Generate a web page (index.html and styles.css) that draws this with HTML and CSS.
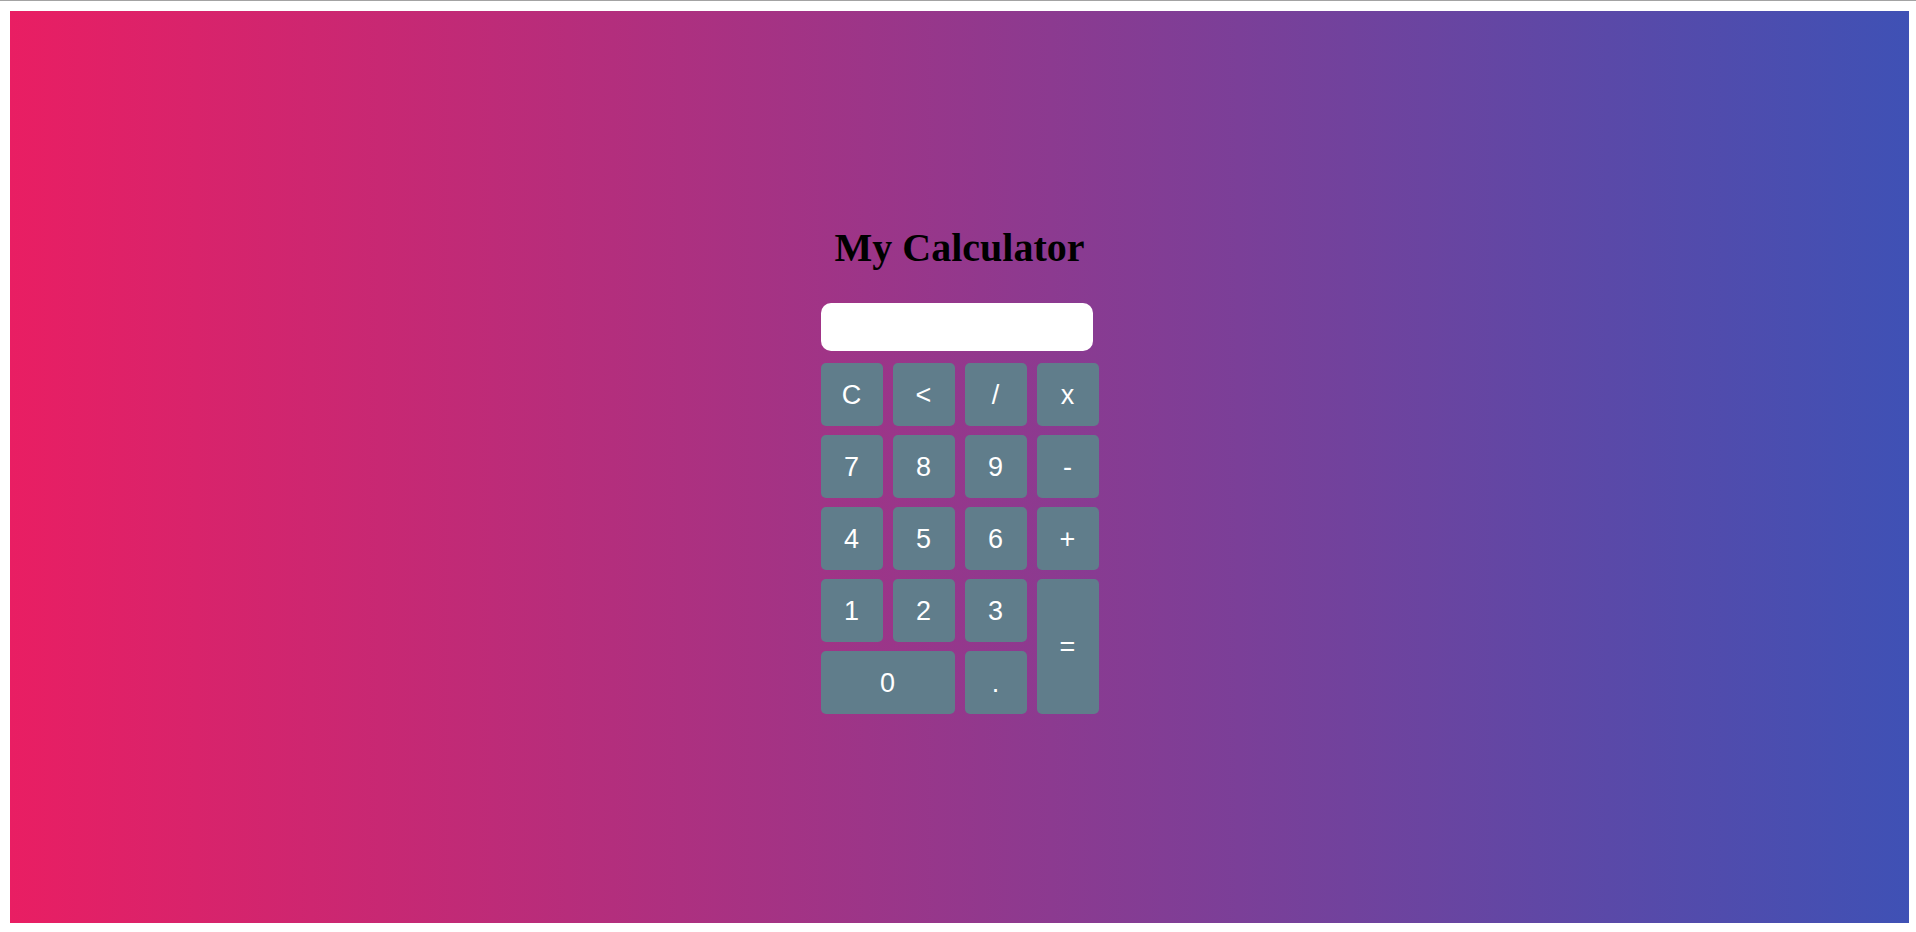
FILE: index.html
```html
<!DOCTYPE html>
<html lang="en">
<head>
<meta charset="UTF-8">
<title>My Calculator</title>
<link rel="stylesheet" href="styles.css">
</head>
<body>
  <main class="page">
    <div class="calculator">
      <h1 class="title">My Calculator</h1>
      <input class="display" type="text" readonly>
      <div class="keys">
        <button class="key">C</button>
        <button class="key">&lt;</button>
        <button class="key">/</button>
        <button class="key">x</button>
        <button class="key">7</button>
        <button class="key">8</button>
        <button class="key">9</button>
        <button class="key">-</button>
        <button class="key">4</button>
        <button class="key">5</button>
        <button class="key">6</button>
        <button class="key">+</button>
        <button class="key">1</button>
        <button class="key">2</button>
        <button class="key">3</button>
        <button class="key key-equals">=</button>
        <button class="key key-zero">0</button>
        <button class="key">.</button>
      </div>
    </div>
  </main>
</body>
</html>
```

FILE: styles.css
```css
html {
  border-top: 1px solid #a3a3a3;
  background: #ffffff;
}

body {
  margin: 10px 7px 9px 10px;
}

.page {
  height: 912px;
  background: linear-gradient(to right, #e91e63, #3f51b5);
  display: flex;
  align-items: center;
  justify-content: center;
}

.calculator {
  display: flex;
  flex-direction: column;
  align-items: flex-start;
  width: 278px;
  padding-top: 4px;
}

.title {
  align-self: center;
  margin: 0 0 32px;
  font-family: "Liberation Serif", "Times New Roman", serif;
  font-size: 40px;
  line-height: 46px;
  font-weight: bold;
  color: #000000;
}

.display {
  box-sizing: border-box;
  width: 272px;
  height: 48px;
  margin: 0 0 12px;
  padding: 0 12px;
  border: none;
  border-radius: 10px;
  background: #ffffff;
  outline: none;
  font-family: "Liberation Sans", Arial, sans-serif;
  font-size: 24px;
  text-align: right;
}

.keys {
  display: grid;
  grid-template-columns: repeat(4, 62px);
  grid-template-rows: repeat(5, 63px);
  column-gap: 10px;
  row-gap: 9px;
}

.key {
  border: none;
  border-radius: 5px;
  background: #607d8b;
  color: #ffffff;
  font-family: "Liberation Sans", Arial, sans-serif;
  font-size: 27px;
  padding: 2px 0 0;
  cursor: pointer;
}

.key-zero {
  grid-column: span 2;
}

.key-equals {
  grid-column: 4;
  grid-row: 4 / span 2;
}
```
